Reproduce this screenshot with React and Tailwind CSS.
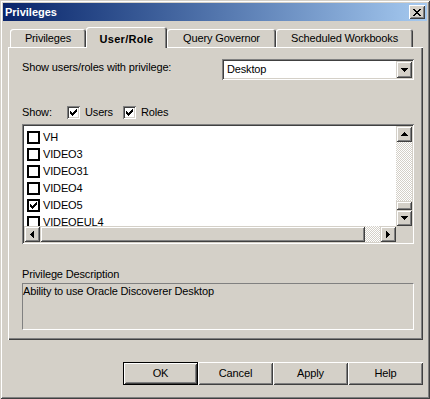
import React from "react";

const raisedBtn =
  "shadow-[inset_1px_1px_0_#ffffff,inset_-1px_-1px_0_#404040,inset_2px_2px_0_#d4d0c8,inset_-2px_-2px_0_#808080]";
const raisedScroll =
  "shadow-[inset_1px_1px_0_#d4d0c8,inset_-1px_-1px_0_#404040,inset_2px_2px_0_#ffffff,inset_-2px_-2px_0_#808080]";
const sunken =
  "shadow-[inset_1px_1px_0_#808080,inset_-1px_-1px_0_#ffffff,inset_2px_2px_0_#404040,inset_-2px_-2px_0_#d4d0c8]";
const checker =
  "bg-[image:repeating-conic-gradient(#ffffff_0_25%,#d4d0c8_0_50%)] bg-[length:2px_2px] bg-size-[2px_2px]";

const CheckGlyph = () => (
  <svg width="7" height="7" viewBox="0 0 7 7" shapeRendering="crispEdges">
    <path
      fill="#000"
      d="M6 0h1v1h-1z M5 1h2v1h-2z M0 2h1v1h-1z M4 2h3v1h-3z M0 3h2v1h-2z M3 3h3v1h-3z M0 4h5v1h-5z M1 5h3v1h-3z M2 6h1v1h-1z"
    />
  </svg>
);

const ArrowDown = () => (
  <svg width="7" height="4" viewBox="0 0 7 4" shapeRendering="crispEdges">
    <path fill="#000" d="M0 0h7v1h-7z M1 1h5v1h-5z M2 2h3v1h-3z M3 3h1v1h-1z" />
  </svg>
);
const ArrowUp = () => (
  <svg width="7" height="4" viewBox="0 0 7 4" shapeRendering="crispEdges">
    <path fill="#000" d="M3 0h1v1h-1z M2 1h3v1h-3z M1 2h5v1h-5z M0 3h7v1h-7z" />
  </svg>
);
const ArrowLeft = () => (
  <svg width="4" height="7" viewBox="0 0 4 7" shapeRendering="crispEdges">
    <path fill="#000" d="M0 3h1v1h-1z M1 2h1v3h-1z M2 1h1v5h-1z M3 0h1v7h-1z" />
  </svg>
);
const ArrowRight = () => (
  <svg width="4" height="7" viewBox="0 0 4 7" shapeRendering="crispEdges">
    <path fill="#000" d="M0 0h1v7h-1z M1 1h1v5h-1z M2 2h1v3h-1z M3 3h1v1h-1z" />
  </svg>
);
const CloseGlyph = () => (
  <svg width="8" height="7" viewBox="0 0 8 7" shapeRendering="crispEdges">
    <path
      fill="#000"
      d="M0 0h2v1h-2z M6 0h2v1h-2z M1 1h2v1h-2z M5 1h2v1h-2z M2 2h4v1h-4z M3 3h2v1h-2z M2 4h4v1h-4z M1 5h2v1h-2z M5 5h2v1h-2z M0 6h2v1h-2z M6 6h2v1h-2z"
    />
  </svg>
);

const SunkenCheck = ({ checked }) => (
  <div className={`w-[13px] h-[13px] shrink-0 bg-white flex items-center justify-center ${sunken}`}>
    {checked && <CheckGlyph />}
  </div>
);

const ListItem = ({ label, checked }) => (
  <div className="h-[17px] flex items-center shrink-0">
    <div className="w-[13px] h-[13px] shrink-0 border-2 border-black bg-white flex items-center justify-center">
      {checked && <CheckGlyph />}
    </div>
    <span className="ml-[3px] leading-[13px]">{label}</span>
  </div>
);

const ScrollBtn = ({ children }) => (
  <div className={`w-[16px] h-[16px] shrink-0 bg-[#d4d0c8] flex items-center justify-center ${raisedScroll}`}>
    {children}
  </div>
);

const Tab = ({ label, w }) => (
  <div
    className={`h-[18px] rounded-t-[3px] flex items-center justify-center shadow-[inset_1px_1px_0_#ffffff,inset_-1px_0_0_#404040,inset_-2px_0_0_#808080]`}
    style={{ width: w }}
  >
    {label}
  </div>
);

const Button = ({ label, def }) => (
  <div
    className={`w-[75px] h-[23px] flex items-center justify-center ${def ? "border border-black" : ""} ${raisedBtn}`}
  >
    {label}
  </div>
);

export default function App() {
  const items = [
    ["VH", false],
    ["VIDEO3", false],
    ["VIDEO31", false],
    ["VIDEO4", false],
    ["VIDEO5", true],
    ["VIDEOEUL4", false],
  ];
  return (
    <div
      className={`w-[430px] h-[399px] bg-[#d4d0c8] p-[3px] text-[11px] tracking-[-0.15px] text-black font-['Liberation_Sans','Arial',sans-serif] leading-[13px] select-none ${raisedScroll}`}
    >
      {/* Title bar */}
      <div className="h-[18px] flex items-center justify-between bg-linear-to-r from-[#0a246a] to-[#a6caf0] pl-[2px] pr-[2px]">
        <span className="text-white font-bold text-[11px] tracking-normal">Privileges</span>
        <div className={`w-[16px] h-[14px] bg-[#d4d0c8] flex items-center justify-center ${raisedBtn}`}>
          <CloseGlyph />
        </div>
      </div>

      {/* Tabs */}
      <div className="mt-[6px] ml-[5px] pl-[2px] h-[20px] flex items-end">
        <Tab label="Privileges" w={76} />
        <div className="relative z-10 -mb-px w-[81px] h-[21px] rounded-t-[3px] bg-[#d4d0c8] flex items-center justify-center pt-[3px] font-bold tracking-[0.3px] shadow-[inset_1px_1px_0_#ffffff,inset_-1px_0_0_#404040,inset_-2px_0_0_#808080]">
          User/Role
        </div>
        <Tab label="Query Governor" w={109} />
        <Tab label="Scheduled Workbooks" w={137} />
      </div>

      {/* Panel */}
      <div className="ml-[5px] w-[415px] h-[293px] pl-[14px] pr-[9px] pt-[12px] shadow-[inset_1px_1px_0_#ffffff,inset_-1px_-1px_0_#404040,inset_-2px_-2px_0_#808080]">
        <div className="flex h-[21px]">
          <div className="flex-1 pt-[2px]">Show users/roles with privilege:</div>
          <div className={`w-[192px] h-[21px] bg-white p-[2px] flex ${sunken}`}>
            <div className="flex-1 pl-[3px] flex items-center">Desktop</div>
            <div className={`w-[16px] h-[17px] bg-[#d4d0c8] flex items-center justify-center ${raisedScroll}`}>
              <ArrowDown />
            </div>
          </div>
        </div>

        <div className="mt-[26px] h-[13px] flex items-center">
          <span className="w-[45px] shrink-0">Show:</span>
          <SunkenCheck checked />
          <span className="ml-[5px] w-[38px] shrink-0">Users</span>
          <SunkenCheck checked />
          <span className="ml-[5px]">Roles</span>
        </div>

        {/* List */}
        <div className={`mt-[5px] h-[120px] bg-white p-[2px] flex flex-col ${sunken}`}>
          <div className="flex h-[100px]">
            <div className="flex-1 overflow-hidden pl-[3px] pt-[3px] flex flex-col">
              {items.map(([l, c]) => (
                <ListItem key={l} label={l} checked={c} />
              ))}
            </div>
            <div className="w-[16px] flex flex-col">
              <ScrollBtn>
                <ArrowUp />
              </ScrollBtn>
              <div className={`flex-1 ${checker}`} />
              <div className={`h-[9px] bg-[#d4d0c8] ${raisedScroll}`} />
              <ScrollBtn>
                <ArrowDown />
              </ScrollBtn>
            </div>
          </div>
          <div className="flex h-[16px]">
            <ScrollBtn>
              <ArrowLeft />
            </ScrollBtn>
            <div className={`w-[325px] h-[16px] bg-[#d4d0c8] ${raisedScroll}`} />
            <div className={`flex-1 ${checker}`} />
            <ScrollBtn>
              <ArrowRight />
            </ScrollBtn>
            <div className="w-[16px] bg-[#d4d0c8]" />
          </div>
        </div>

        <div className="mt-[24px]">Privilege Description</div>
        <div className="mt-[2px] h-[47px] border border-t-[#808080] border-l-[#808080] border-b-white border-r-white pt-[1px]">
          Ability to use Oracle Discoverer Desktop
        </div>
      </div>

      {/* Buttons */}
      <div className="mt-[22px] pr-[4px] flex justify-end">
        <Button label="OK" def />
        <Button label="Cancel" />
        <Button label="Apply" />
        <Button label="Help" />
      </div>
    </div>
  );
}
